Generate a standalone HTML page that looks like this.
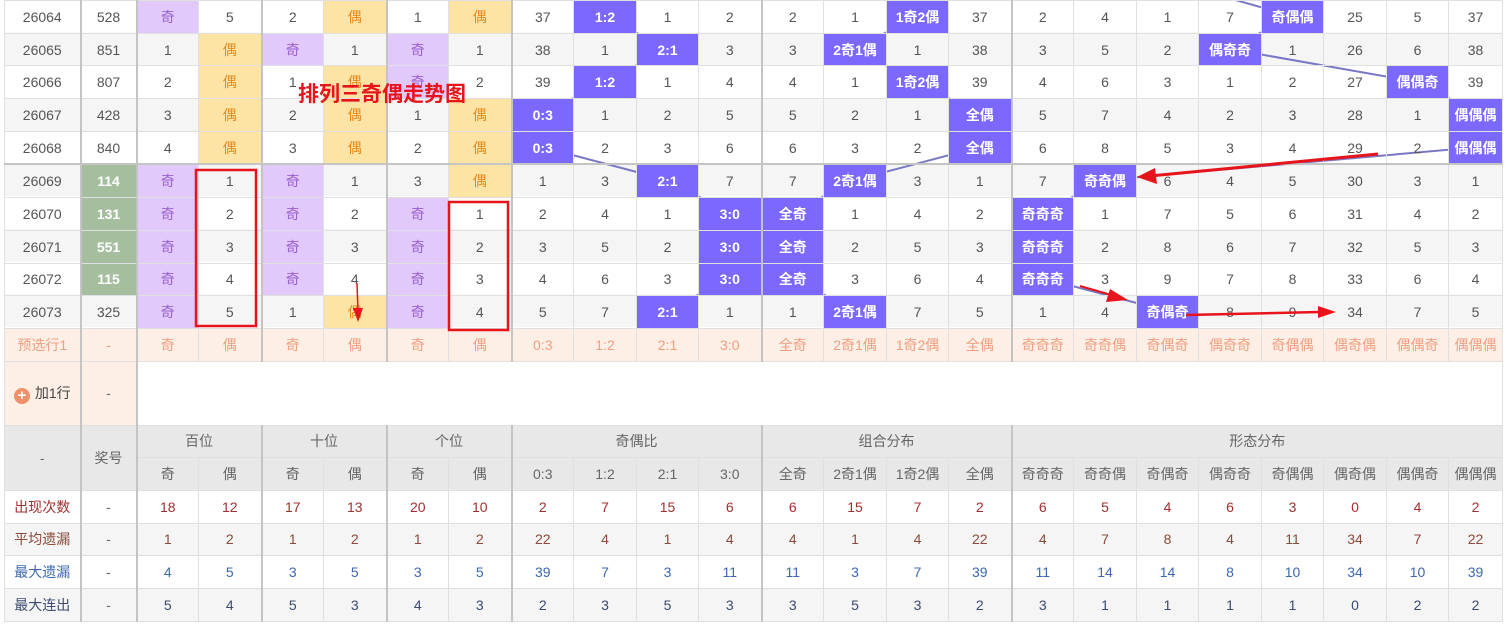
<!DOCTYPE html>
<html><head><meta charset="utf-8">
<style>
html,body{margin:0;padding:0;background:#fff;width:1506px;height:626px;overflow:hidden}
body{font-family:"Liberation Sans","Noto Sans CJK SC",sans-serif;font-size:14px;color:#555;position:relative}
.stripes{position:absolute;left:4px;top:0;width:1498px;height:327px;background:repeating-linear-gradient(#fff 0 32.7px,#f5f5f5 32.7px 65.4px);z-index:0}
table{position:absolute;left:4px;top:0;border-collapse:collapse;table-layout:fixed;width:1498px;z-index:2}
td{border:1px solid #e0e0e0;text-align:center;padding:0;white-space:nowrap;overflow:hidden;height:31.7px}
tr.a td{background:#fff}
tr.s td{background:#f5f5f5}
tr.d td{background:transparent}
td.g{border-left:2px solid #c4c4c4}
tr.t td{border-top:2px solid #c4c4c4}
tr td.p{background:#e2c9fc !important;color:#9a60d0}
tr td.o{background:#fde3a4 !important;color:#e8891a}
tr td.b{background:#7b68ff !important;color:#fff;font-weight:bold}
tr td.gr{background:#a5bf9e !important;color:#fff;font-weight:bold}
tr.pre td{background:#fdeee6;color:#f0a080;height:31.7px}
tr.add td{height:63px}
tr.h td{background:#e8e8e8;color:#666;height:31.7px}
tr.r1 td{color:#a03030}
tr.r2 td{color:#8b4a3a}
tr.r3 td{color:#3d68b0}
tr.r4 td{color:#3a4a70}
.plus{display:inline-block;width:16px;height:16px;border-radius:50%;background:#f0906a;color:#fff;font-weight:bold;line-height:16px;font-size:15px;vertical-align:-2px;margin-right:5px}
svg{position:absolute;left:0;top:0}
.lines{z-index:1}
.red{z-index:3}
.title{position:absolute;left:298px;top:78px;color:#e8141c;font-weight:bold;font-size:21px;z-index:4}
</style></head><body>
<div class="stripes"></div>
<svg class="lines" width="1506" height="626">
<g stroke="#7878c4" stroke-width="2" fill="none">
<polyline points="605,16 667,49 605,82 542,114 542,147 667,180 730,213 730,278 667,311"/>
<polyline points="917,16 855,49 917,82 980,114 980,147 855,180 792,213 792,278 855,311"/>
<polyline points="1200,-10 1292,16 1230,49 1417,82 1480,114 1480,147 1105,180 1042,213 1042,278 1167,311"/>
</g>
</svg>
<table>
<colgroup><col style="width:76px"><col style="width:56px">
<col style="width:62px"><col style="width:63px"><col style="width:62px"><col style="width:63px"><col style="width:62px"><col style="width:63px"><col style="width:62px"><col style="width:63px"><col style="width:62px"><col style="width:63px"><col style="width:62px"><col style="width:63px"><col style="width:62px"><col style="width:63px"><col style="width:62px"><col style="width:63px"><col style="width:62px"><col style="width:63px"><col style="width:62px"><col style="width:63px"><col style="width:62px"><col style="width:54px"></colgroup>
<tr class="a d"><td>26064</td><td class="g">528</td><td class="g p">奇</td><td>5</td><td class="g">2</td><td class="o">偶</td><td class="g">1</td><td class="o">偶</td><td class="g">37</td><td class="b">1:2</td><td>1</td><td>2</td><td class="g">2</td><td>1</td><td class="b">1奇2偶</td><td>37</td><td class="g">2</td><td>4</td><td>1</td><td>7</td><td class="b">奇偶偶</td><td>25</td><td>5</td><td>37</td></tr>
<tr class="s d"><td>26065</td><td class="g">851</td><td class="g">1</td><td class="o">偶</td><td class="g p">奇</td><td>1</td><td class="g p">奇</td><td>1</td><td class="g">38</td><td>1</td><td class="b">2:1</td><td>3</td><td class="g">3</td><td class="b">2奇1偶</td><td>1</td><td>38</td><td class="g">3</td><td>5</td><td>2</td><td class="b">偶奇奇</td><td>1</td><td>26</td><td>6</td><td>38</td></tr>
<tr class="a d"><td>26066</td><td class="g">807</td><td class="g">2</td><td class="o">偶</td><td class="g">1</td><td class="o">偶</td><td class="g p">奇</td><td>2</td><td class="g">39</td><td class="b">1:2</td><td>1</td><td>4</td><td class="g">4</td><td>1</td><td class="b">1奇2偶</td><td>39</td><td class="g">4</td><td>6</td><td>3</td><td>1</td><td>2</td><td>27</td><td class="b">偶偶奇</td><td>39</td></tr>
<tr class="s d"><td>26067</td><td class="g">428</td><td class="g">3</td><td class="o">偶</td><td class="g">2</td><td class="o">偶</td><td class="g">1</td><td class="o">偶</td><td class="g b">0:3</td><td>1</td><td>2</td><td>5</td><td class="g">5</td><td>2</td><td>1</td><td class="b">全偶</td><td class="g">5</td><td>7</td><td>4</td><td>2</td><td>3</td><td>28</td><td>1</td><td class="b">偶偶偶</td></tr>
<tr class="a d"><td>26068</td><td class="g">840</td><td class="g">4</td><td class="o">偶</td><td class="g">3</td><td class="o">偶</td><td class="g">2</td><td class="o">偶</td><td class="g b">0:3</td><td>2</td><td>3</td><td>6</td><td class="g">6</td><td>3</td><td>2</td><td class="b">全偶</td><td class="g">6</td><td>8</td><td>5</td><td>3</td><td>4</td><td>29</td><td>2</td><td class="b">偶偶偶</td></tr>
<tr class="s t d"><td>26069</td><td class="g gr">114</td><td class="g p">奇</td><td>1</td><td class="g p">奇</td><td>1</td><td class="g">3</td><td class="o">偶</td><td class="g">1</td><td>3</td><td class="b">2:1</td><td>7</td><td class="g">7</td><td class="b">2奇1偶</td><td>3</td><td>1</td><td class="g">7</td><td class="b">奇奇偶</td><td>6</td><td>4</td><td>5</td><td>30</td><td>3</td><td>1</td></tr>
<tr class="a d"><td>26070</td><td class="g gr">131</td><td class="g p">奇</td><td>2</td><td class="g p">奇</td><td>2</td><td class="g p">奇</td><td>1</td><td class="g">2</td><td>4</td><td>1</td><td class="b">3:0</td><td class="g b">全奇</td><td>1</td><td>4</td><td>2</td><td class="g b">奇奇奇</td><td>1</td><td>7</td><td>5</td><td>6</td><td>31</td><td>4</td><td>2</td></tr>
<tr class="s d"><td>26071</td><td class="g gr">551</td><td class="g p">奇</td><td>3</td><td class="g p">奇</td><td>3</td><td class="g p">奇</td><td>2</td><td class="g">3</td><td>5</td><td>2</td><td class="b">3:0</td><td class="g b">全奇</td><td>2</td><td>5</td><td>3</td><td class="g b">奇奇奇</td><td>2</td><td>8</td><td>6</td><td>7</td><td>32</td><td>5</td><td>3</td></tr>
<tr class="a d"><td>26072</td><td class="g gr">115</td><td class="g p">奇</td><td>4</td><td class="g p">奇</td><td>4</td><td class="g p">奇</td><td>3</td><td class="g">4</td><td>6</td><td>3</td><td class="b">3:0</td><td class="g b">全奇</td><td>3</td><td>6</td><td>4</td><td class="g b">奇奇奇</td><td>3</td><td>9</td><td>7</td><td>8</td><td>33</td><td>6</td><td>4</td></tr>
<tr class="s d"><td>26073</td><td class="g">325</td><td class="g p">奇</td><td>5</td><td class="g">1</td><td class="o">偶</td><td class="g p">奇</td><td>4</td><td class="g">5</td><td>7</td><td class="b">2:1</td><td>1</td><td class="g">1</td><td class="b">2奇1偶</td><td>7</td><td>5</td><td class="g">1</td><td>4</td><td class="b">奇偶奇</td><td>8</td><td>9</td><td>34</td><td>7</td><td>5</td></tr>
<tr class="pre"><td>预选行1</td><td class="g">-</td><td class="g">奇</td><td>偶</td><td class="g">奇</td><td>偶</td><td class="g">奇</td><td>偶</td><td class="g">0:3</td><td>1:2</td><td>2:1</td><td>3:0</td><td class="g">全奇</td><td>2奇1偶</td><td>1奇2偶</td><td>全偶</td><td class="g">奇奇奇</td><td>奇奇偶</td><td>奇偶奇</td><td>偶奇奇</td><td>奇偶偶</td><td>偶奇偶</td><td>偶偶奇</td><td>偶偶偶</td></tr>
<tr class="add"><td style="background:#fdeee6;color:#444"><span class="plus">+</span>加1行</td><td class="g" style="background:#fdeee6;color:#666">-</td><td class="g" colspan="22" style="background:#fff"></td></tr>
<tr class="h"><td rowspan="2">-</td><td class="g" rowspan="2">奖号</td><td class="g" colspan="2">百位</td><td class="g" colspan="2">十位</td><td class="g" colspan="2">个位</td><td class="g" colspan="4">奇偶比</td><td class="g" colspan="4">组合分布</td><td class="g" colspan="8">形态分布</td></tr>
<tr class="h"><td class="g">奇</td><td>偶</td><td class="g">奇</td><td>偶</td><td class="g">奇</td><td>偶</td><td class="g">0:3</td><td>1:2</td><td>2:1</td><td>3:0</td><td class="g">全奇</td><td>2奇1偶</td><td>1奇2偶</td><td>全偶</td><td class="g">奇奇奇</td><td>奇奇偶</td><td>奇偶奇</td><td>偶奇奇</td><td>奇偶偶</td><td>偶奇偶</td><td>偶偶奇</td><td>偶偶偶</td></tr>
<tr class="a r1"><td>出现次数</td><td class="g" style="color:#666">-</td><td class="g">18</td><td>12</td><td class="g">17</td><td>13</td><td class="g">20</td><td>10</td><td class="g">2</td><td>7</td><td>15</td><td>6</td><td class="g">6</td><td>15</td><td>7</td><td>2</td><td class="g">6</td><td>5</td><td>4</td><td>6</td><td>3</td><td>0</td><td>4</td><td>2</td></tr>
<tr class="s r2"><td>平均遗漏</td><td class="g" style="color:#666">-</td><td class="g">1</td><td>2</td><td class="g">1</td><td>2</td><td class="g">1</td><td>2</td><td class="g">22</td><td>4</td><td>1</td><td>4</td><td class="g">4</td><td>1</td><td>4</td><td>22</td><td class="g">4</td><td>7</td><td>8</td><td>4</td><td>11</td><td>34</td><td>7</td><td>22</td></tr>
<tr class="a r3"><td>最大遗漏</td><td class="g" style="color:#666">-</td><td class="g">4</td><td>5</td><td class="g">3</td><td>5</td><td class="g">3</td><td>5</td><td class="g">39</td><td>7</td><td>3</td><td>11</td><td class="g">11</td><td>3</td><td>7</td><td>39</td><td class="g">11</td><td>14</td><td>14</td><td>8</td><td>10</td><td>34</td><td>10</td><td>39</td></tr>
<tr class="s r4"><td>最大连出</td><td class="g" style="color:#666">-</td><td class="g">5</td><td>4</td><td class="g">5</td><td>3</td><td class="g">4</td><td>3</td><td class="g">2</td><td>3</td><td>5</td><td>3</td><td class="g">3</td><td>5</td><td>3</td><td>2</td><td class="g">3</td><td>1</td><td>1</td><td>1</td><td>1</td><td>0</td><td>2</td><td>2</td></tr>
</table>
<svg class="red" width="1506" height="626">
<g fill="#e8141c" stroke="#e8141c">
<rect x="196" y="170" width="60" height="156" fill="none" stroke-width="2.5"/>
<rect x="449" y="202" width="59" height="128" fill="none" stroke-width="2.5"/>
<line x1="357" y1="283" x2="358" y2="312" stroke-width="1.5"/><polygon points="353,308 363,308 358,322" stroke="none"/>
<line x1="1378" y1="154" x2="1150" y2="176" stroke-width="3"/><polygon points="1155,168 1157,184 1137,177" stroke="none"/>
<line x1="1080" y1="286" x2="1115" y2="296" stroke-width="2"/><polygon points="1110,289 1106,302 1128,300" stroke="none"/>
<line x1="1186" y1="315" x2="1320" y2="312" stroke-width="2.5"/><polygon points="1318,306 1318,318 1336,312" stroke="none"/>
</g>
</svg>
<div class="title">排列三奇偶走势图</div>
</body></html>
